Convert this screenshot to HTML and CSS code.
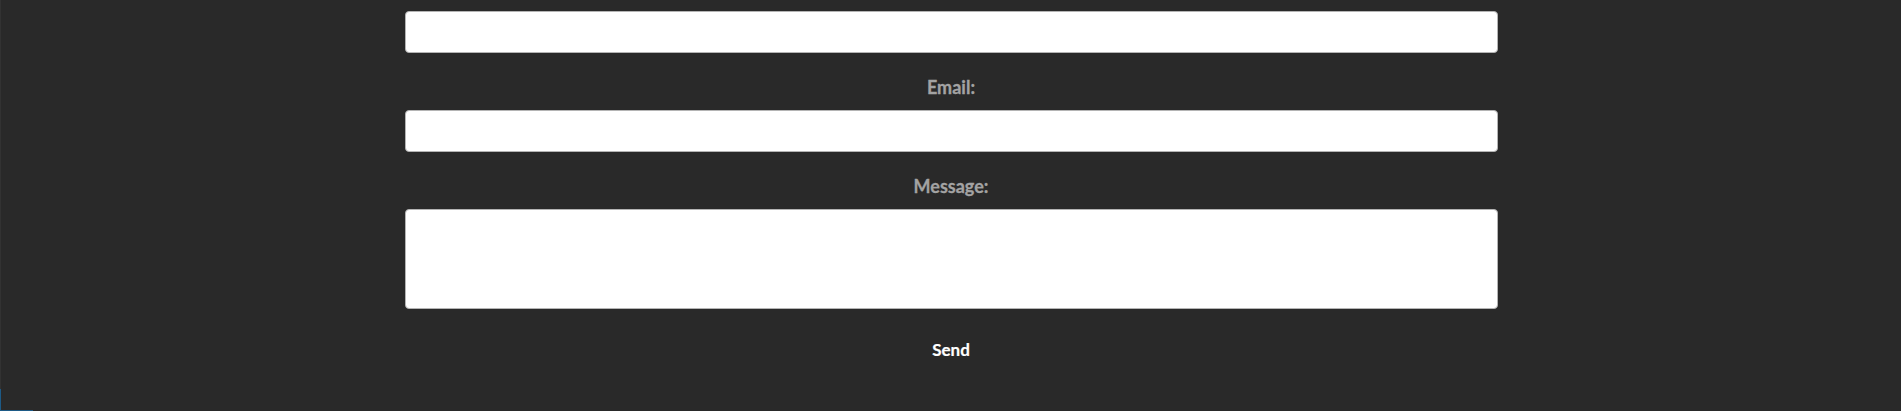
FILE: index.html
```html
<!DOCTYPE html>
<html lang="en">
<head>
<meta charset="utf-8">
<title>Contact</title>
<link rel="stylesheet" href="styles.css">
</head>
<body>
<div class="page">
  <form class="contact-form">
    <input class="field" type="text" aria-label="Name">
    <label class="field-label" for="email">Email:</label>
    <input class="field" id="email" type="email">
    <label class="field-label" for="message">Message:</label>
    <textarea class="field field-area" id="message"></textarea>
    <button class="send-btn" type="button">Send</button>
  </form>
  <div class="focus-corner"></div>
</div>
</body>
</html>
```

FILE: styles.css
```css
html, body {
  margin: 0;
  padding: 0;
  height: 100%;
  background: #292929;
  overflow: hidden;
}

.page {
  position: relative;
  box-sizing: border-box;
  height: 411px;
  border-left: 1px solid #323232;
  padding-top: 11px;
  font-family: "Lato", "Segoe UI", sans-serif;
}

.contact-form {
  width: 1093px;
  margin: 0 auto;
  display: flex;
  flex-direction: column;
  align-items: center;
}

.field {
  box-sizing: border-box;
  display: block;
  width: 100%;
  height: 42px;
  margin: 0;
  border: 1px solid #b4b4b4;
  border-radius: 4px;
  background: #ffffff;
  padding: 8px 10px;
  font-family: inherit;
  font-size: 16px;
}

.field-area {
  height: 100px;
  resize: none;
}

.field-label {
  display: block;
  margin: 23px 0 12px;
  height: 22px;
  line-height: 22px;
  font-size: 18px;
  font-weight: 700;
  color: #a3a3a3;
  text-align: center;
  -webkit-text-stroke: 0.3px #a3a3a3;
}

.send-btn {
  margin-top: 21px;
  padding: 10px 20px;
  border: none;
  background: transparent;
  color: #ffffff;
  font-family: inherit;
  font-size: 17px;
  font-weight: 700;
  line-height: 20px;
  cursor: pointer;
  -webkit-text-stroke: 0.2px #ffffff;
}

.focus-corner {
  position: absolute;
  left: -1px;
  bottom: 0;
  width: 33px;
  height: 22px;
  border-left: 1px solid #1d5a86;
  border-bottom: 1px solid #1d5a86;
  box-sizing: border-box;
}
```
